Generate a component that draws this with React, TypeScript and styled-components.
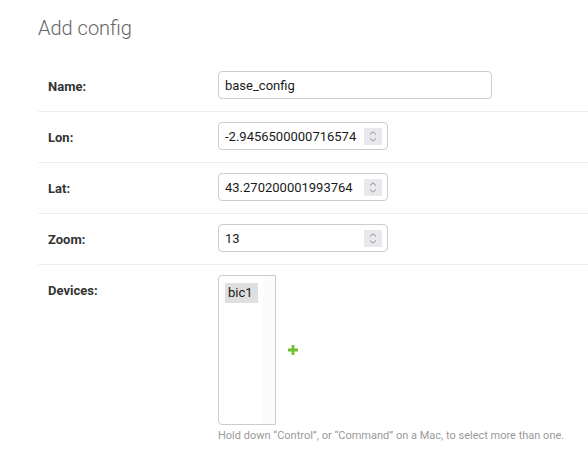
import React from "react";
import styled, { createGlobalStyle } from "styled-components";

const GlobalStyle = createGlobalStyle`
  body {
    margin: 0;
    background: #fff;
    font-family: Roboto, "Liberation Sans", sans-serif;
    color: #333;
  }
`;

const Content = styled.div`
  padding: 16px 0 0 38px;
`;

const Title = styled.h1`
  margin: 0 0 21px;
  font-size: 20px;
  line-height: 24px;
  font-weight: 300;
  color: #666;
`;

const Fieldset = styled.div`
  display: flex;
  flex-direction: column;
`;

const FormRow = styled.div`
  display: flex;
  align-items: flex-start;
  padding: 10px 10px 12px;
  border-bottom: 1px solid #eee;
`;

const Label = styled.label`
  width: 160px;
  flex: none;
  padding: 6px 10px 0 0;
  font-size: 13px;
  line-height: 20px;
  font-weight: 700;
  color: #333;
`;

const Field = styled.div`
  display: flex;
  flex-direction: column;
`;

const TextInput = styled.input`
  box-sizing: border-box;
  width: 274px;
  height: 28px;
  padding: 0 6px;
  border: 1px solid #ccc;
  border-radius: 4px;
  font-family: Roboto, "Liberation Sans", sans-serif;
  font-size: 13px;
  color: #1a1a1a;
  outline: none;
`;

const NumberBox = styled.div`
  box-sizing: border-box;
  display: flex;
  align-items: center;
  width: 170px;
  height: 28px;
  padding: 0 5px 0 6px;
  border: 1px solid #ccc;
  border-radius: 4px;
`;

const NumberText = styled.input`
  flex: 1;
  min-width: 0;
  border: 0;
  padding: 0;
  font-family: Roboto, "Liberation Sans", sans-serif;
  font-size: 13px;
  color: #1a1a1a;
  outline: none;
  background: transparent;
`;

const Spinner = styled.div`
  width: 18px;
  height: 17px;
  flex: none;
  background: #e9e9ed;
  display: flex;
  align-items: center;
  justify-content: center;
`;

const WidgetWrap = styled.div`
  display: flex;
  align-items: center;
  gap: 12px;
`;

const MultiSelect = styled.div`
  box-sizing: border-box;
  width: 58px;
  height: 150px;
  border: 1px solid #ccc;
  border-radius: 4px 0 0 4px;
  padding: 6px 0 0 6px;
  background: linear-gradient(to right, #fff 44px, #fbfbfb 44px);
`;

const Option = styled.div`
  display: inline-block;
  padding: 0 5px 0 3px;
  height: 20px;
  line-height: 20px;
  font-size: 13px;
  color: #1a1a1a;
  background: #dfdfdf;
`;

const AddLink = styled.a`
  display: flex;
  cursor: pointer;
`;

const Help = styled.div`
  margin-top: 4px;
  font-size: 11px;
  line-height: 14px;
  color: #999;
`;

function SpinIcon() {
  return (
    <Spinner>
      <svg width="10" height="13" viewBox="0 0 10 13">
        <path d="M2 4.5 L5 1.8 L8 4.5" fill="none" stroke="#8e8e93" strokeWidth="1" />
        <path d="M2 8.5 L5 11.2 L8 8.5" fill="none" stroke="#8e8e93" strokeWidth="1" />
      </svg>
    </Spinner>
  );
}

function NumberField({ value }: { value: string }) {
  return (
    <NumberBox>
      <NumberText defaultValue={value} />
      <SpinIcon />
    </NumberBox>
  );
}

function PlusIcon() {
  return (
    <svg width="10" height="10" viewBox="0 0 10 10">
      <path d="M3.6 0h2.8v3.6H10v2.8H6.4V10H3.6V6.4H0V3.6h3.6z" fill="#70bf2b" />
    </svg>
  );
}

const numberRows = [
  { label: "Lon:", value: "-2.9456500000716574" },
  { label: "Lat:", value: "43.270200001993764" },
  { label: "Zoom:", value: "13" },
];

export default function App() {
  return (
    <>
      <GlobalStyle />
      <Content>
        <Title>Add config</Title>
        <Fieldset>
          <FormRow>
            <Label>Name:</Label>
            <Field>
              <TextInput defaultValue="base_config" />
            </Field>
          </FormRow>
          {numberRows.map((row) => (
            <FormRow key={row.label}>
              <Label>{row.label}</Label>
              <Field>
                <NumberField value={row.value} />
              </Field>
            </FormRow>
          ))}
          <FormRow>
            <Label>Devices:</Label>
            <Field>
              <WidgetWrap>
                <MultiSelect>
                  <Option>bic1</Option>
                </MultiSelect>
                <AddLink title="Add another device">
                  <PlusIcon />
                </AddLink>
              </WidgetWrap>
              <Help>
                Hold down “Control”, or “Command” on a Mac, to select more than one.
              </Help>
            </Field>
          </FormRow>
        </Fieldset>
      </Content>
    </>
  );
}
